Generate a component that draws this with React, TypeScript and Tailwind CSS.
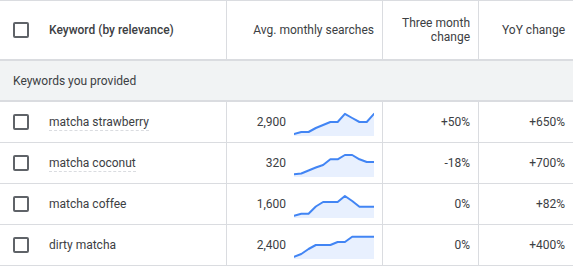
import React from "react"

type Row = {
  keyword: string
  searches: string
  trend: number[]
  threeMonth: string
  yoy: string
  underline: boolean
}

const ROWS: Row[] = [
  { keyword: "matcha strawberry", searches: "2,900", trend: [22, 20, 20, 16, 13, 10, 10, 1.8, 6, 10, 10, 1.8], threeMonth: "+50%", yoy: "+650%", underline: true },
  { keyword: "matcha coconut", searches: "320", trend: [21.3, 20.5, 17.5, 14.5, 12, 6.3, 6.3, 2, 2, 6.3, 9, 9], threeMonth: "-18%", yoy: "+700%", underline: true },
  { keyword: "matcha coffee", searches: "1,600", trend: [21.7, 19.7, 19.7, 12.5, 8, 8, 8, 2, 7, 12.7, 12.7, 12.7], threeMonth: "0%", yoy: "+82%", underline: false },
  { keyword: "dirty matcha", searches: "2,400", trend: [21.7, 19, 14, 10, 10, 10, 7, 7, 1.8, 1.8, 1.8, 1.8], threeMonth: "0%", yoy: "+400%", underline: false },
]

function Sparkline({ values }: { values: number[] }) {
  const step = 80 / (values.length - 1)
  const pts = values.map((v, i) => `${(i * step).toFixed(2)},${v}`).join(" ")
  return (
    <svg width="80" height="24" viewBox="0 0 80 24" className="block shrink-0 mt-[3px]">
      <polygon points={`0,24 ${pts} 80,24`} fill="#e8f0fe" />
      <polyline points={pts} fill="none" stroke="#4285f4" strokeWidth="2" strokeLinejoin="round" strokeLinecap="round" />
    </svg>
  )
}

function Checkbox() {
  return <span className="block w-4 h-4 shrink-0 border-2 border-[#5f6368] rounded-[2px]" />
}

export default function App() {
  return (
    <div className="w-[573px] h-[268px] bg-white text-[12px] text-[#3c4043] font-['Roboto',sans-serif]">
      <div className="border-t border-[#dadce0]">
        {/* header */}
        <div className="grid grid-cols-[226px_156px_96px_1fr] h-[60px] border-b-2 border-[#dadce0]">
          <div className="flex items-center pl-[13px] gap-5">
            <Checkbox />
            <span className="font-medium">Keyword (by relevance)</span>
          </div>
          <div className="flex items-center justify-end pr-2 border-l border-[#dadce0]">
            Avg. monthly searches
          </div>
          <div className="flex items-center justify-end pr-2 border-l border-[#dadce0] text-right leading-[14px]">
            Three month
            <br />
            change
          </div>
          <div className="flex items-center justify-end pr-2 border-l border-[#dadce0]">
            YoY change
          </div>
        </div>

        {/* group row */}
        <div className="h-[41px] flex items-center pl-[13px] bg-[#f1f3f4] border-b-2 border-[#dadce0]">
          Keywords you provided
        </div>

        {ROWS.map((r) => (
          <div key={r.keyword} className="grid grid-cols-[226px_156px_96px_1fr] h-[41px] border-b border-[#dadce0]">
            <div className="flex items-center pl-[13px] gap-5">
              <Checkbox />
              <span
                className={
                  r.underline
                    ? "border-b border-dashed border-[#dadce0] leading-[16px] mt-px"
                    : "border-b border-transparent leading-[16px] mt-px"
                }
              >
                {r.keyword}
              </span>
            </div>
            <div className="flex items-center justify-end gap-2 pr-2 border-l border-[#dadce0]">
              <span>{r.searches}</span>
              <Sparkline values={r.trend} />
            </div>
            <div className="flex items-center justify-end pr-2 border-l border-[#dadce0]">
              {r.threeMonth}
            </div>
            <div className="flex items-center justify-end pr-2 border-l border-[#dadce0]">
              {r.yoy}
            </div>
          </div>
        ))}
      </div>
    </div>
  )
}
